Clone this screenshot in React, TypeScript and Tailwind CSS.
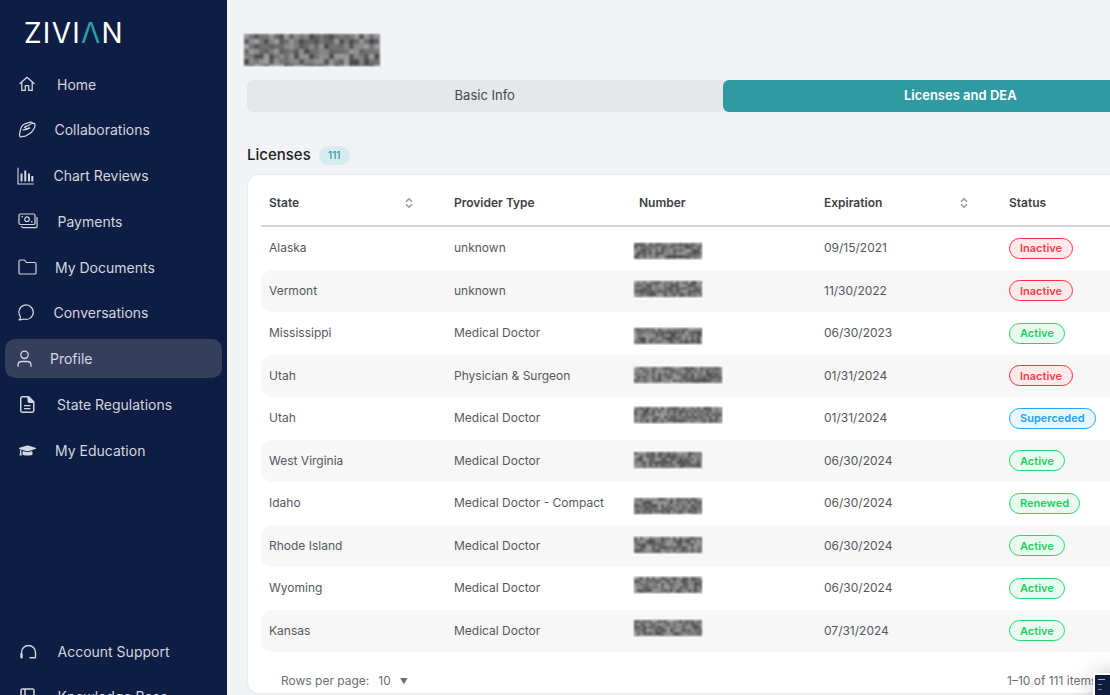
import type { ReactNode } from 'react';
import { FaGraduationCap } from 'react-icons/fa';
import { ChevronDown, ChevronUp } from 'lucide-react';

// Redacted values in the screenshot: a small seeded mosaic that gets blurred
function Redacted({ w, h, seed, cell = 4 }: { w: number; h: number; seed: number; cell?: number }) {
  const cells: { x: number; y: number; c: string }[] = [];
  let n = seed * 7919 + 13;
  for (let y = 0; y < h; y += cell) {
    for (let x = 0; x < w; x += cell) {
      n = (n * 1103515245 + 12345) % 2147483648;
      const v = 70 + ((n >> 8) % 90);
      cells.push({ x, y, c: `rgb(${v},${v},${v})` });
    }
  }
  const id = `blur-${seed}`;
  return (
    <svg width={w} height={h} viewBox={`0 0 ${w} ${h}`} className="block shrink-0">
      <defs>
        <filter id={id} x="-5%" y="-5%" width="110%" height="110%">
          <feGaussianBlur stdDeviation="0.9" />
        </filter>
      </defs>
      <g filter={`url(#${id})`}>
        <rect x="1" y="1" width={w - 2} height={h - 2} fill="#6f6f6f" />
        {cells.map((p, i) => (
          <rect key={i} x={p.x + 1} y={p.y + 1} width={Math.min(cell, w - p.x - 2)} height={Math.min(cell, h - p.y - 2)} fill={p.c} />
        ))}
      </g>
    </svg>
  );
}

const iconCls = 'fill-none stroke-current';

const HomeIcon = (
  <svg width="16" height="16" viewBox="0 0 16 16" className={iconCls} strokeWidth="1.3" strokeLinejoin="round" strokeLinecap="round">
    <path d="M1 7.6 8 1.3l7 6.3" />
    <path d="M2.8 6.4v8h3.5V9.6h3.4v4.8h3.5v-8" />
  </svg>
);
const CollabIcon = (
  <svg width="18" height="18" viewBox="0 0 18 18" className={iconCls} strokeWidth="1.2" strokeLinejoin="round" strokeLinecap="round">
    <path d="M7.5 2.6 12.5 1.2c1.3-.3 2 .3 2.4 1.2l1.8-.1c.5 1.7.4 3.4-.4 4.7l-1.6 2.6c-.8 1.3-1.6 2-3 2.8l-3.2 2.2c-1.2.8-2.3 1.1-3.4.7l-2.6.9c-.9-1-1.2-2.5-.8-4.1l.8-3.1C2.9 6.4 5 3.4 7.500 2.600Z" />
    <path d="M15 2.500c-1.800 0-3.300.6-4.300 1.800C9.800 5.400 7.700 5 6.500 6.400c1.200 1.200 3.300 1.400 5.200.5" />
    <path d="M11.500 7c-1.700 1.300-3.500 2.100-6.500 1.900" />
  </svg>
);
const ChartIcon = (
  <svg width="18" height="18" viewBox="0 0 18 18" className={iconCls} strokeWidth="1.1" strokeLinecap="round">
    <path d="M1 1v16h15.500" />
    <path d="M4.500 6.500v8M8.300 3.500v11M12 6.500v8M15.300 9v5.500" strokeWidth="2" strokeLinecap="butt" />
  </svg>
);
const PaymentIcon = (
  <svg width="20" height="16" viewBox="0 0 20 16" className={iconCls} strokeWidth="1.2" strokeLinejoin="round">
    <rect x="1" y="1" width="16" height="10.500" rx="1.500" />
    <circle cx="9" cy="6.200" r="2.300" />
    <path d="M3.500 3.600h1.500M13 8.800h1.500" />
    <path d="M19 4v9.500a1.200 1.200 0 0 1-1.200 1.200H5.500c-1.200 0-2-.8-2.300-1.400" />
  </svg>
);
const FolderIcon = (
  <svg width="19" height="16" viewBox="0 0 19 16" className={iconCls} strokeWidth="1.2" strokeLinejoin="round">
    <path d="M1 2.300C1 1.500 1.500 1 2.300 1h4.200l2 2.500h8.200c.8 0 1.300.5 1.300 1.300v8.900c0 .8-.5 1.300-1.300 1.300H2.300c-.8 0-1.300-.5-1.300-1.300Z" />
  </svg>
);
const ChatIcon = (
  <svg width="17" height="17" viewBox="0 0 17 17" className={iconCls} strokeWidth="1.2" strokeLinejoin="round" strokeLinecap="round">
    <path d="M1 15.800c1.200-.9 1.600-1.900 1.400-3.200A7.200 7.200 0 1 1 5.700 15c-1.500.6-3 .9-4.700.800Z" />
  </svg>
);
const UserIcon = (
  <svg width="15" height="17" viewBox="0 0 15 17" className={iconCls} strokeWidth="1.3" strokeLinecap="round">
    <circle cx="7.500" cy="4.800" r="3.700" />
    <path d="M1 16.300v-1.200c0-2.200 1.700-3.600 3.800-3.600h5.400c2.100 0 3.800 1.400 3.800 3.600v1.200" />
  </svg>
);
const DocIcon = (
  <svg width="15" height="17" viewBox="0 0 15 17">
    <path
      fill="currentColor"
      fillRule="evenodd"
      d="M2.500 0H9l5.500 5.500v9c0 1.400-1.100 2.500-2.500 2.500H2.500C1.100 17 0 15.900 0 14.500v-12C0 1.100 1.100 0 2.500 0Zm0 1.500c-.6 0-1 .4-1 1v12c0 .6.400 1 1 1H12c.6 0 1-.4 1-1V7H9.500C8.400 7 7.500 6.100 7.500 5V1.500ZM4 9h6.500v1.300H4Zm0 3h6.500v1.300H4Z"
    />
  </svg>
);
const HeadsetIcon = (
  <svg width="17" height="15" viewBox="0 0 17 15" className={iconCls} strokeWidth="1.4" strokeLinecap="round">
    <path d="M1.500 13.500V8.500a7 7 0 0 1 14 0v4" />
    <path d="M15.500 13.800H10" />
    <path d="M1.500 10v3.500" strokeWidth="2.200" />
  </svg>
);
const BookIcon = (
  <svg width="15" height="17" viewBox="0 0 15 17" className={iconCls} strokeWidth="1.500">
    <rect x="1" y="1" width="13" height="15" rx="1.500" />
    <path d="M5 1v9h9" />
  </svg>
);

type NavItem = { label: string; icon: ReactNode; pl: string; w: string; active?: boolean };

const navItems: NavItem[] = [
  { label: 'Home', icon: HomeIcon, pl: 'pl-[14px]', w: 'w-[38px]' },
  { label: 'Collaborations', icon: CollabIcon, pl: 'pl-[13px]', w: 'w-[36.5px]' },
  { label: 'Chart Reviews', icon: ChartIcon, pl: 'pl-[12px]', w: 'w-[36.5px]' },
  { label: 'Payments', icon: PaymentIcon, pl: 'pl-[13px]', w: 'w-[39.5px]' },
  { label: 'My Documents', icon: FolderIcon, pl: 'pl-[12.500px]', w: 'w-[37.500px]' },
  { label: 'Conversations', icon: ChatIcon, pl: 'pl-[13px]', w: 'w-[35.500px]' },
  { label: 'Profile', icon: UserIcon, pl: 'pl-[12px]', w: 'w-[33px]', active: true },
  { label: 'State Regulations', icon: DocIcon, pl: 'pl-[15px]', w: 'w-[37px]' },
  { label: 'My Education', icon: <FaGraduationCap size={17} />, pl: 'pl-[13.500px]', w: 'w-[36.500px]' },
];

const bottomItems: NavItem[] = [
  { label: 'Account Support', icon: HeadsetIcon, pl: 'pl-[14.500px]', w: 'w-[38px]' },
  { label: 'Knowledge Base', icon: BookIcon, pl: 'pl-[15px]', w: 'w-[37.500px]' },
];

function NavRow({ item }: { item: NavItem }) {
  return (
    <div
      className={`mx-[5px] flex h-[39px] shrink-0 items-center rounded-[10px] text-[14px] ${item.pl} ${
        item.active ? 'bg-[#353f5c] text-[#d5d8e0]' : 'text-[#d3d6de]'
      }`}
    >
      <span className={`flex shrink-0 items-center ${item.w}`}>{item.icon}</span>
      <span>{item.label}</span>
    </div>
  );
}

type Status = 'Inactive' | 'Active' | 'Superceded' | 'Renewed';

const statusCls: Record<Status, string> = {
  Inactive: 'border-[#ff2f3e] bg-[#ffeaeb] text-[#ff3b47]',
  Active: 'border-[#22d968] bg-[#e9fbf0] text-[#22cf63]',
  Superceded: 'border-[#1fa8f5] bg-[#e9f6fe] text-[#1fa3f0]',
  Renewed: 'border-[#22d968] bg-[#e9fbf0] text-[#22cf63]',
};

type License = { state: string; type: string; exp: string; status: Status; blurW: number; shift: number };

const licenses: License[] = [
  { state: 'Alaska', type: 'unknown', exp: '09/15/2021', status: 'Inactive', blurW: 70, shift: 5 },
  { state: 'Vermont', type: 'unknown', exp: '11/30/2022', status: 'Inactive', blurW: 70, shift: -4 },
  { state: 'Mississippi', type: 'Medical Doctor', exp: '06/30/2023', status: 'Active', blurW: 70, shift: 5 },
  { state: 'Utah', type: 'Physician & Surgeon', exp: '01/31/2024', status: 'Inactive', blurW: 90, shift: -2 },
  { state: 'Utah', type: 'Medical Doctor', exp: '01/31/2024', status: 'Superceded', blurW: 90, shift: -6 },
  { state: 'West Virginia', type: 'Medical Doctor', exp: '06/30/2024', status: 'Active', blurW: 70, shift: -2 },
  { state: 'Idaho', type: 'Medical Doctor - Compact', exp: '06/30/2024', status: 'Renewed', blurW: 70, shift: 6 },
  { state: 'Rhode Island', type: 'Medical Doctor', exp: '06/30/2024', status: 'Active', blurW: 70, shift: -2 },
  { state: 'Wyoming', type: 'Medical Doctor', exp: '06/30/2024', status: 'Active', blurW: 70, shift: -6 },
  { state: 'Kansas', type: 'Medical Doctor', exp: '07/31/2024', status: 'Active', blurW: 70, shift: -6 },
];

function SortIcon() {
  return (
    <span className="flex flex-col items-center text-[#9b9ea5]">
      <ChevronUp size={10} strokeWidth={4} className="-mb-[4px]" />
      <ChevronDown size={10} strokeWidth={4} />
    </span>
  );
}

function HeaderCell({ label, sortable }: { label: string; sortable?: boolean }) {
  return (
    <div className="flex items-center justify-between pl-2 pr-[32px] text-[12px] font-semibold text-[#3c3f46]">
      <span>{label}</span>
      {sortable && <SortIcon />}
    </div>
  );
}

export default function App() {
  return (
    <div className="flex h-[695px] w-[1110px] overflow-hidden bg-[#f1f3f6] font-['Inter',sans-serif]">
      {/* Sidebar */}
      <aside className="h-full w-[227px] shrink-0 overflow-hidden bg-[#0e1d43]">
        <div className="flex h-[64.500px] items-start pl-[24px] pt-[14px] text-[28px] font-normal leading-[38px] tracking-[0.045em] text-white">
          ZIVI<span className="text-[#2a9da5]">Λ</span>N
        </div>
        <nav className="flex flex-col gap-[6.750px]">
          {navItems.map((item) => (
            <NavRow key={item.label} item={item} />
          ))}
        </nav>
        <div className="mt-[162px] flex flex-col gap-[6.750px]">
          {bottomItems.map((item) => (
            <NavRow key={item.label} item={item} />
          ))}
        </div>
      </aside>

      {/* Main */}
      <main className="relative min-w-0 flex-1 overflow-hidden">
        <div className="w-[951px] pl-0 ml-[20px]">
          <div className="-ml-[4px] h-[80px] pt-[33px]">
            <Redacted w={138} h={34} seed={3} cell={5} />
          </div>

          <div className="grid h-[32px] grid-cols-2 text-[13px]">
            <div className="flex items-center justify-center rounded-l-[6px] bg-[#e6e7e9] text-[#45484e]">Basic Info</div>
            <div className="flex items-center justify-center rounded-[6px] bg-[#2f9aa2] font-semibold text-white">Licenses and DEA</div>
          </div>

          <div className="mt-[31px] flex h-[24px] items-center gap-[8px]">
            <h2 className="text-[15px] font-medium text-[#1d1f24]">Licenses</h2>
            <span className="flex h-[19px] w-[31px] items-center justify-center rounded-full bg-[#d5edef] text-[10px] font-medium text-[#2f9aa2]">
              111
            </span>
          </div>

          {/* License table */}
          <div className="mt-[7px] h-[520px] rounded-[12px] border border-[#e8e9ec] bg-white pl-[13px] pt-[6px]">
            <div className="grid h-[46px] grid-cols-[185px_185px_185px_185px_1fr] border-b-2 border-[#d5d6d9] pr-[13px]">
              <HeaderCell label="State" sortable />
              <HeaderCell label="Provider Type" />
              <HeaderCell label="Number" />
              <HeaderCell label="Expiration" sortable />
              <HeaderCell label="Status" />
            </div>
            <div className="pr-[13px]">
              {licenses.map((row, i) => (
                <div
                  key={row.state + row.type}
                  className={`grid h-[42.500px] grid-cols-[185px_185px_185px_185px_1fr] items-center rounded-[10px] text-[12px] text-[#55585e] ${
                    i % 2 === 1 ? 'bg-[#f7f7f7]' : ''
                  }`}
                >
                  <div className="pl-2">{row.state}</div>
                  <div className="pl-2">{row.type}</div>
                  <div className="-ml-[6px] pl-2" style={{ marginTop: row.shift }}>
                    <Redacted w={row.blurW} h={18} seed={i + 11} cell={3} />
                  </div>
                  <div className="pl-2">{row.exp}</div>
                  <div className="pl-2">
                    <span
                      className={`inline-flex h-[21px] items-center rounded-full border-[1.500px] px-[10px] text-[11px] font-semibold ${statusCls[row.status]}`}
                    >
                      {row.status}
                    </span>
                  </div>
                </div>
              ))}
            </div>
            <div className="mt-[20px] flex items-center justify-between pl-[20px] pr-[13px] text-[12px] text-[#6b6e74]">
              <div className="flex items-center gap-[9px]">
                <span>Rows per page:</span>
                <span>10</span>
                <span className="text-[8px]">▼</span>
              </div>
              <span className="absolute left-[780px]">1–10 of 111 items</span>
            </div>
          </div>
        </div>

        {/* Floating recording thumbnail in the corner */}
        <div className="absolute left-[866px] top-[673px] h-[30px] w-[50px] rounded-tl-[3px] border-l-2 border-t-2 border-white bg-[#101c3c] shadow-[0_0_22px_rgba(0,0,0,0.22)]">
          <div className="ml-[3px] mt-[4px] h-[1px] w-[7px] bg-[#aab2c6]" />
          <div className="ml-[3px] mt-[4px] h-[1px] w-[4px] bg-[#6f7a96]" />
          <div className="ml-[3px] mt-[4px] h-[1px] w-[4px] bg-[#6f7a96]" />
        </div>
      </main>
    </div>
  );
}
